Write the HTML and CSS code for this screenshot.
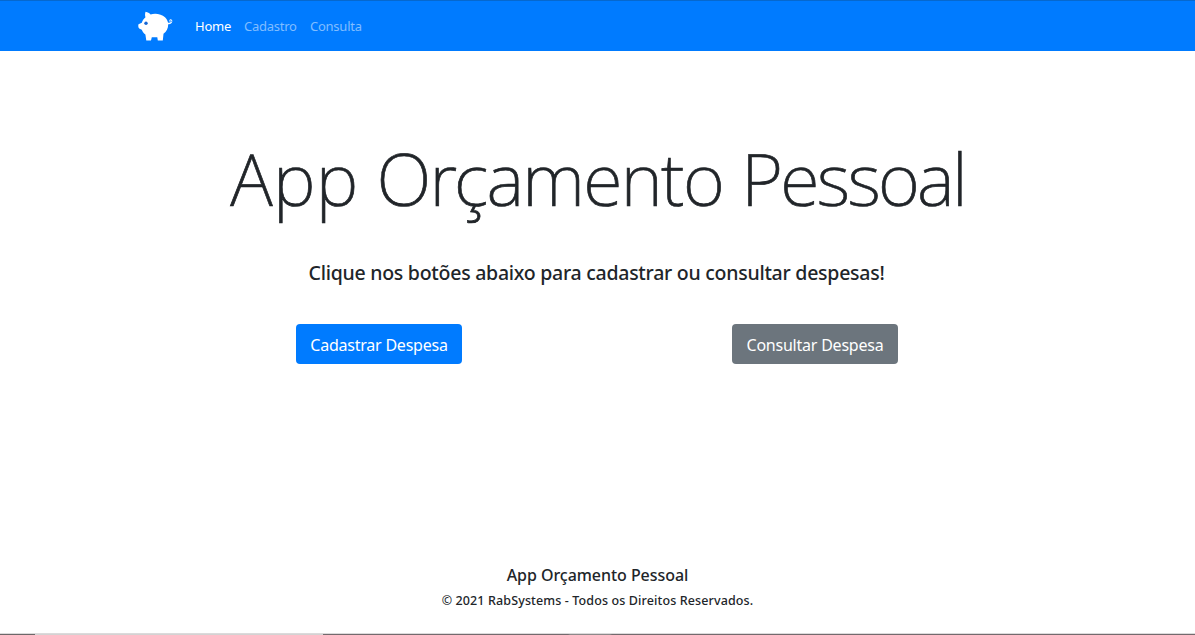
FILE: index.html
```html
<!DOCTYPE html>
<html lang="pt-br">
<head>
<meta charset="utf-8">
<title>App Orçamento Pessoal</title>
<link rel="stylesheet" href="styles.css">
</head>
<body>
<nav class="navbar">
  <a class="brand" href="#" aria-label="Home">
    <svg class="pig" viewBox="0 0 35 31" width="35" height="31">
      <path fill="#fff" d="M7.6.7C9.600 1 11.500 2.300 12.600 3.400C17 1.800 23.500 2.800 27 6.200C28.600 7.800 29.600 9.600 30 11.600C31 12 31.700 11.700 32 11.200C30.700 9.800 31.500 8 33 8.300C34.800 8.700 34.700 11.300 33.300 12.300C32.500 13.200 31.200 13.500 30.200 13.300C30.200 17.400 28.500 20.600 25.500 22.800L24.800 29.600H19.800L19.300 26.200H13.800L13 29.600H8.300L7.400 23.500C5.500 22.300 4.400 20.600 3.800 18.800L1.200 17.500C.3 16.600 0 14.400.5 13.200L3.800 11.800C4.400 9.600 5.700 7.700 7.500 6.200C6.900 4.500 6.900 2.200 7.600.7Z"/>
      <path fill="none" stroke="#007bff" stroke-width=".8" d="M32.200 10.700C32 9.500 33.200 9.200 33.300 10.200Q33.300 10.800 32.600 11.300"/>
      <circle cx="8" cy="12.300" r="1.700" fill="#1767d5"/>
    </svg>
  </a>
  <a class="link active" href="#">Home</a>
  <a class="link cadastro" href="#">Cadastro</a>
  <a class="link consulta" href="#">Consulta</a>
</nav>
<main class="hero">
  <h1 class="title"><span class="title-start">App</span> Orçamento <span class="title-end">Pessoal</span></h1>
  <p class="lead">Clique nos botões abaixo para cadastrar ou consultar despesas!</p>
  <div class="actions">
    <a class="btn primary" href="#">Cadastrar Despesa</a>
    <a class="btn secondary" href="#">Consultar Despesa</a>
  </div>
</main>
<footer class="footer">
  <div class="name">App Orçamento Pessoal</div>
  <div class="copy">© 2021 RabSystems - Todos os Direitos Reservados.</div>
</footer>
<div class="edge"></div>
</body>
</html>
```
FILE: styles.css
```css
* { box-sizing: border-box; }
body {
  margin: 0;
  height: 635px;
  display: flex;
  flex-direction: column;
  overflow: hidden;
  background: #fff;
  color: #212529;
  font-family: "Noto Sans", "Open Sans", sans-serif;
}
a { text-decoration: none; white-space: nowrap; }
.navbar {
  height: 51px;
  flex: none;
  display: flex;
  align-items: center;
  padding: 0 0 0 138px;
  background: #007bff;
  border-top: 1px solid #0668ce;
}
.brand { width: 57px; height: 31px; }
.pig { display: block; }
.link { font-size: 13px; line-height: 20px; letter-spacing: -.25px; color: #80bdff; }
.active { color: #fff; width: 49px; }
.cadastro { width: 66px; }
.hero { flex: 1; padding-top: 84px; }
.title {
  margin: 0;
  font-size: 72px;
  font-weight: 250;
  line-height: 86px;
  letter-spacing: -1.660px;
  word-spacing: 1px;
  -webkit-text-stroke: .7px #212529;
  text-align: center;
  white-space: nowrap;
}
.title-start { letter-spacing: .3px; }
.title-end { letter-spacing: -2.700px; }
.lead {
  margin: 39px 2px 0 0;
  font-size: 19.500px;
  font-weight: 500;
  line-height: 26px;
  letter-spacing: -.26px;
  text-align: center;
  white-space: nowrap;
}
.actions {
  display: grid;
  grid-template-columns: 166px 166px;
  column-gap: 270px;
  justify-content: center;
  margin: 38px 1px 0 0;
}
.btn {
  height: 40px;
  border-radius: 4px;
  color: #fff;
  font-size: 16px;
  line-height: 42px;
  letter-spacing: -.22px;
  text-align: center;
}
.primary { background: #007bff; }
.secondary { background: #6c757d; }
.footer {
  height: 70px;
  flex: none;
  font-weight: 500;
  text-align: center;
  white-space: nowrap;
}
.name { font-size: 16px; line-height: 25px; letter-spacing: -.05px; }
.copy { font-size: 12.500px; line-height: 26px; letter-spacing: .12px; }
.edge {
  height: 2px;
  flex: none;
  border-top: 1px solid #dcdadb;
  background: linear-gradient(90deg, #6c6869 35px, #d4d3d3 35px 323px, #736a6d 323px 568px, #8d898a 570px 610px, #736a6d 612px);
}
```
